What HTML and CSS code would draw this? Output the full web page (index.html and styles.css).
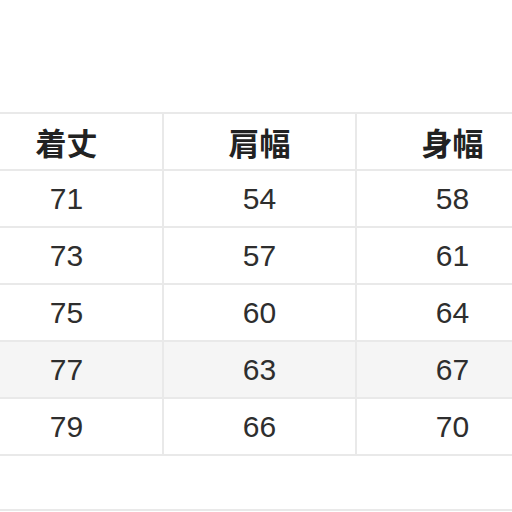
FILE: index.html
```html
<!DOCTYPE html>
<html lang="ja">
<head>
<meta charset="utf-8">
<link rel="stylesheet" href="styles.css">
</head>
<body>
<div class="page">
  <div class="frame">
    <div class="grid">
      <div class="cell head">着丈</div><div class="cell head">肩幅</div><div class="cell head">身幅</div>
      <div class="cell">71</div><div class="cell">54</div><div class="cell">58</div>
      <div class="cell">73</div><div class="cell">57</div><div class="cell">61</div>
      <div class="cell">75</div><div class="cell">60</div><div class="cell">64</div>
      <div class="cell alt">77</div><div class="cell alt">63</div><div class="cell alt">67</div>
      <div class="cell">79</div><div class="cell">66</div><div class="cell">70</div>
    </div>
  </div>
  <div class="bottom-line"></div>
</div>
</body>
</html>
```
FILE: styles.css
```css
html, body {
  margin: 0;
  padding: 0;
  background: #ffffff;
  overflow: hidden;
  width: 512px;
  height: 512px;
}
.page {
  padding-top: 112px;
}
.frame {
  width: 512px;
  overflow: hidden;
}
.grid {
  display: grid;
  grid-template-columns: 191px 191px 191px;
  grid-auto-rows: 55px;
  gap: 2px;
  padding: 2px;
  background: #e9e9e9;
  width: max-content;
  margin-left: -31px;
}
.cell {
  background: #ffffff;
  display: flex;
  align-items: center;
  justify-content: center;
  font-family: "Liberation Sans", Arial, sans-serif;
  font-size: 30px;
  color: #2e2e2e;
}
.cell.alt {
  background: #f5f5f5;
}
.cell.head {
  font-family: "Noto Sans CJK JP", "Noto Sans", sans-serif;
  font-weight: 700;
  font-size: 31px;
  color: #222222;
}
.bottom-line {
  margin-top: 53px;
  height: 2px;
  background: #e9e9e9;
}
```
